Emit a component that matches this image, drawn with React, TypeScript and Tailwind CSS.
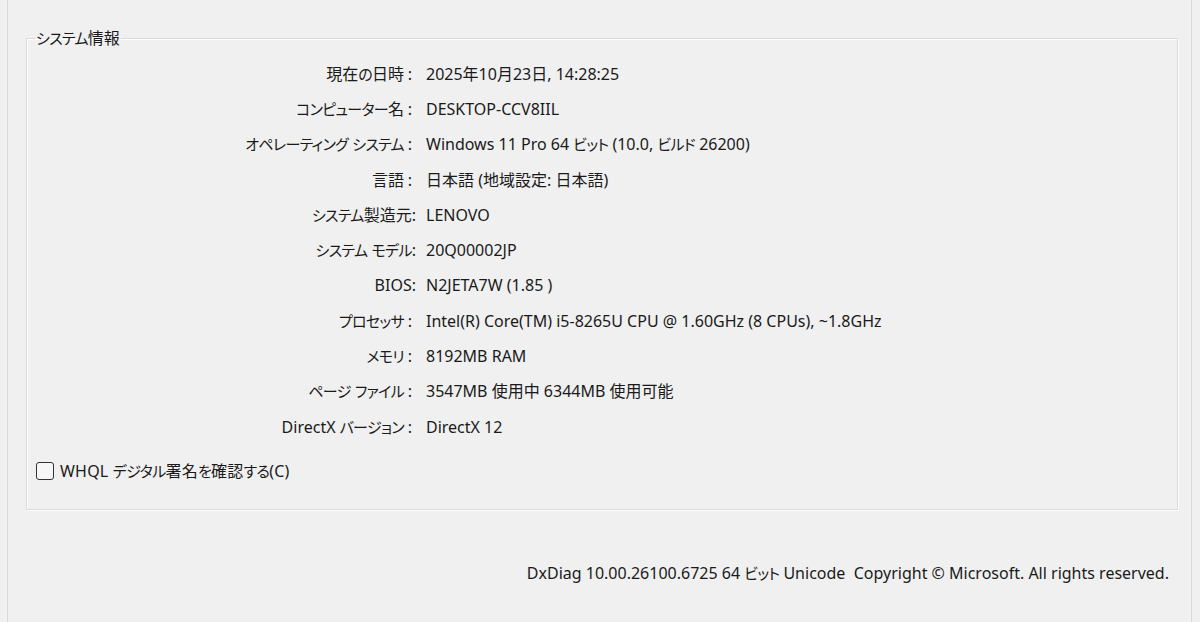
import React from 'react';

const FONT = '"Noto Sans", "Noto Sans CJK JP", sans-serif';

// Kana runs are set proportional and tight, like Yu Gothic UI next to Segoe UI
const KANA = /([\u3040-\u30ff\uff66-\uff9f]+)/;

function Jp({ text }: { text: string }) {
  return (
    <>
      {text.split(KANA).map((part, i) =>
        i % 2 === 1 ? (
          <span key={i} className="text-[15px] tracking-[-0.7px] [font-feature-settings:'palt']">
            {part}
          </span>
        ) : (
          <React.Fragment key={i}>{part}</React.Fragment>
        )
      )}
    </>
  );
}

const rows: { label: string; wide: boolean; value: string }[] = [
  { label: '現在の日時', wide: true, value: '2025年10月23日, 14:28:25' },
  { label: 'コンピューター名', wide: true, value: 'DESKTOP-CCV8IIL' },
  { label: 'オペレーティング システム', wide: true, value: 'Windows 11 Pro 64 ビット (10.0, ビルド 26200)' },
  { label: '言語', wide: true, value: '日本語 (地域設定: 日本語)' },
  { label: 'システム製造元', wide: false, value: 'LENOVO' },
  { label: 'システム モデル', wide: false, value: '20Q00002JP' },
  { label: 'BIOS', wide: false, value: 'N2JETA7W (1.85 )' },
  { label: 'プロセッサ', wide: true, value: 'Intel(R) Core(TM) i5-8265U CPU @ 1.60GHz (8 CPUs), ~1.8GHz' },
  { label: 'メモリ', wide: true, value: '8192MB RAM' },
  { label: 'ページ ファイル', wide: true, value: '3547MB 使用中 6344MB 使用可能' },
  { label: 'DirectX バージョン', wide: true, value: 'DirectX 12' },
];

export default function App() {
  return (
    <div
      className="w-[1200px] h-[622px] bg-[#f0f0f0] text-[#1a1a1a] text-[16px] pl-[7px] overflow-hidden"
      style={{ fontFamily: FONT }}
    >
      <div className="w-[1185px] h-full border-l border-r border-[#d9d9d9] flex flex-col">
        {/* システム情報 group box */}
        <fieldset className="ml-[18px] mt-[28px] w-[1152px] h-[482px] border border-[#dadada] shadow-[inset_1px_1px_0_#ffffff,1px_1px_0_#ffffff] flex flex-col">
          <legend className="ml-[8px] px-[1px] leading-[20px]">
            <Jp text="システム情報" />
          </legend>

          <div className="pt-[8px] flex flex-col">
            {rows.map((r) => (
              <div key={r.label} className="h-[35.3px] flex items-center">
                <div className="w-[389px] flex justify-end items-baseline whitespace-nowrap">
                  <span>
                    <Jp text={r.label} />
                  </span>
                  {r.wide ? (
                    <span className="w-[12px] text-center">:</span>
                  ) : (
                    <span>:</span>
                  )}
                </div>
                <div className="pl-[10px] whitespace-nowrap">
                  <Jp text={r.value} />
                </div>
              </div>
            ))}
          </div>

          <label className="mt-[15px] ml-[9px] flex items-center gap-[6px]">
            <span className="w-[18px] h-[18px] rounded-[3px] border border-[#333333] bg-[#f7f7f7]" />
            <span className="tracking-[0.2px]">
              <Jp text="WHQL デジタル署名を確認する(C)" />
            </span>
          </label>
        </fieldset>

        <div className="mt-[51px] pr-[22px] text-right whitespace-nowrap">
          <Jp text="DxDiag 10.00.26100.6725 64 ビット Unicode" />
          &nbsp;&nbsp;Copyright © Microsoft. All rights reserved.
        </div>
      </div>
    </div>
  );
}
